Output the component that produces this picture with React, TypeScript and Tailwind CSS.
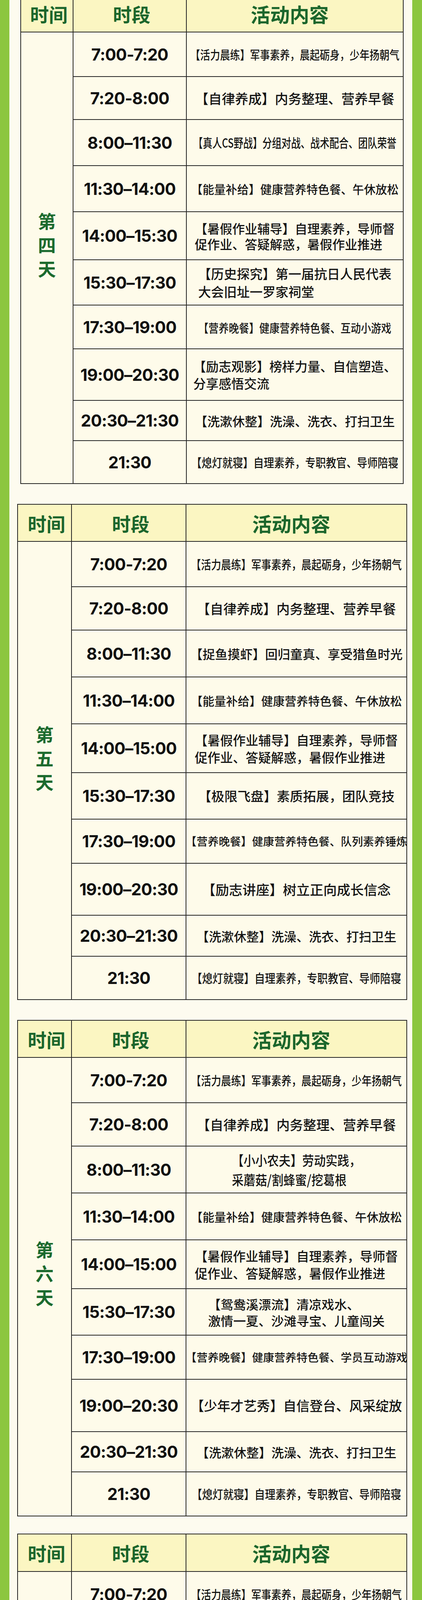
import { Fragment } from "react";

type Row = {
  time: string;
  lines: string[];
  text: string;
  h: string;
};

type Day = {
  label: string[];
  cols: string;
  wrap: string;
  headH: string;
  labelCls: string;
  rows: Row[];
};

const day4: Row[] = [
  { time: "7:00-7:20", lines: ["【活力晨练】军事素养，晨起砺身，少年扬朝气"], text: "text-[25.5px] scale-y-[1.2]", h: "h-[114px]" },
  { time: "7:20-8:00", lines: ["【自律养成】内务整理、营养早餐"], text: "text-[34px]", h: "h-[110px]" },
  { time: "8:00–11:30", lines: ["【真人CS野战】分组对战、战术配合、团队荣誉"], text: "text-[24.5px] scale-y-[1.3]", h: "h-[118px]" },
  { time: "11:30–14:00", lines: ["【能量补给】健康营养特色餐、午休放松"], text: "text-[29.5px]", h: "h-[118px]" },
  { time: "14:00–15:30", lines: ["【暑假作业辅导】自理素养，导师督", "促作业、答疑解惑，暑假作业推进"], text: "text-[32px] leading-[40px]", h: "h-[123px]" },
  { time: "15:30–17:30", lines: ["【历史探究】第一届抗日人民代表", "大会旧址一罗家祠堂"], text: "text-[33px] leading-[46px]", h: "h-[116px]" },
  { time: "17:30–19:00", lines: ["【营养晚餐】健康营养特色餐、互动小游戏"], text: "text-[26px] scale-y-[1.15]", h: "h-[112px]" },
  { time: "19:00–20:30", lines: ["【励志观影】榜样力量、自信塑造、", "分享感悟交流"], text: "text-[32.5px] leading-[44px]", h: "h-[132px]" },
  { time: "20:30–21:30", lines: ["【洗漱休整】洗澡、洗衣、打扫卫生"], text: "text-[32px]", h: "h-[103px]" },
  { time: "21:30", lines: ["【熄灯就寝】自理素养，专职教官、导师陪寝"], text: "text-[26.5px] scale-y-[1.15]", h: "h-[110px]" },
];

const day5: Row[] = [
  { time: "7:00-7:20", lines: ["【活力晨练】军事素养，晨起砺身，少年扬朝气"], text: "text-[25.7px] scale-y-[1.2]", h: "h-[116px]" },
  { time: "7:20-8:00", lines: ["【自律养成】内务整理、营养早餐"], text: "text-[34px]", h: "h-[111px]" },
  { time: "8:00–11:30", lines: ["【捉鱼摸虾】回归童真、享受猎鱼时光"], text: "text-[32px]", h: "h-[120px]" },
  { time: "11:30–14:00", lines: ["【能量补给】健康营养特色餐、午休放松"], text: "text-[30px]", h: "h-[120px]" },
  { time: "14:00–15:00", lines: ["【暑假作业辅导】自理素养，导师督", "促作业、答疑解惑，暑假作业推进"], text: "text-[32.5px] leading-[44px]", h: "h-[125px]" },
  { time: "15:30–17:30", lines: ["【极限飞盘】素质拓展，团队竞技"], text: "text-[33.5px]", h: "h-[119px]" },
  { time: "17:30–19:00", lines: ["【营养晚餐】健康营养特色餐、队列素养锤炼"], text: "text-[28.4px]", h: "h-[113px]" },
  { time: "19:00–20:30", lines: ["【励志讲座】树立正向成长信念"], text: "text-[34.5px]", h: "h-[133px]" },
  { time: "20:30–21:30", lines: ["【洗漱休整】洗澡、洗衣、打扫卫生"], text: "text-[32px]", h: "h-[105px]" },
  { time: "21:30", lines: ["【熄灯就寝】自理素养，专职教官、导师陪寝"], text: "text-[26.8px] scale-y-[1.15]", h: "h-[111px]" },
];

const day6: Row[] = [
  { time: "7:00-7:20", lines: ["【活力晨练】军事素养，晨起砺身，少年扬朝气"], text: "text-[25.7px] scale-y-[1.2]", h: "h-[116px]" },
  { time: "7:20-8:00", lines: ["【自律养成】内务整理、营养早餐"], text: "text-[34px]", h: "h-[111px]" },
  { time: "8:00–11:30", lines: ["【小小农夫】劳动实践，", "采蘑菇/割蜂蜜/挖葛根"], text: "text-[30px] leading-[44px] scale-y-[1.15] text-center", h: "h-[120px]" },
  { time: "11:30–14:00", lines: ["【能量补给】健康营养特色餐、午休放松"], text: "text-[30px]", h: "h-[120px]" },
  { time: "14:00–15:00", lines: ["【暑假作业辅导】自理素养，导师督", "促作业、答疑解惑，暑假作业推进"], text: "text-[32.5px] leading-[44px]", h: "h-[125px]" },
  { time: "15:30–17:30", lines: ["【鸳鸯溪漂流】清凉戏水、", "激情一夏、沙滩寻宝、儿童闯关"], text: "text-[32.3px] leading-[42px]", h: "h-[119px]" },
  { time: "17:30–19:00", lines: ["【营养晚餐】健康营养特色餐、学员互动游戏"], text: "text-[28.4px]", h: "h-[113px]" },
  { time: "19:00–20:30", lines: ["【少年才艺秀】自信登台、风采绽放"], text: "text-[33.8px]", h: "h-[134px]" },
  { time: "20:30–21:30", lines: ["【洗漱休整】洗澡、洗衣、打扫卫生"], text: "text-[32px]", h: "h-[103px]" },
  { time: "21:30", lines: ["【熄灯就寝】自理素养，专职教官、导师陪寝"], text: "text-[26.8px] scale-y-[1.15]", h: "h-[113px]" },
];

const day7: Row[] = [
  { time: "7:00-7:20", lines: ["【活力晨练】军事素养，晨起砺身，少年扬朝气"], text: "text-[25.7px] scale-y-[1.2]", h: "h-[116px]" },
  { time: "7:20-8:00", lines: ["【自律养成】内务整理、营养早餐"], text: "text-[34px]", h: "h-[112px]" },
  { time: "8:00–10:00", lines: ["【乡村生活观摩】劳动实践，采摘、", "捉鸡、烤鱼"], text: "text-[30.5px] leading-[48px] scale-y-[1.1]", h: "h-[120px]" },
  { time: "10:00–11:30", lines: ["【结营盛典】授证表彰、", "成长分享、集体合影"], text: "text-[35px] leading-[50px] pl-[14px]", h: "h-[119px]" },
  { time: "11:30–12:30", lines: ["【能量补给】健康营养特色餐"], text: "text-[42px]", h: "h-[125px]" },
  { time: "12:30", lines: ["【满载而归】安全返程、成长收官"], text: "text-[33.3px]", h: "h-[119px]" },
];

const days: Day[] = [
  { label: ["第", "四", "天"], cols: "grid-cols-[134px_290px_555px]", wrap: "-mt-[14px] ml-[28px]", headH: "h-[95px]", labelCls: "row-span-10 pb-[70px]", rows: day4 },
  { label: ["第", "五", "天"], cols: "grid-cols-[138px_293px_565px]", wrap: "mt-[51px] ml-[20px]", headH: "h-[95px]", labelCls: "row-span-10 pb-[66px]", rows: day5 },
  { label: ["第", "六", "天"], cols: "grid-cols-[138px_293px_565px]", wrap: "mt-[51px] ml-[20px]", headH: "h-[95px]", labelCls: "row-span-10 pb-[72px]", rows: day6 },
  { label: ["第", "七", "天"], cols: "grid-cols-[138px_293px_565px]", wrap: "mt-[44px] ml-[20px]", headH: "h-[96px]", labelCls: "row-span-6 pt-[28px]", rows: day7 },
];

const cell = "border-r-2 border-b-2 border-[#262626]";
const head = "bg-[#fbf6c2] flex items-center justify-center font-bold leading-none text-[#1b662c]";

function DayTable({ day }: { day: Day }) {
  return (
    <div className={`grid w-fit border-l-2 border-t-2 border-[#262626] ${day.cols} ${day.wrap}`}>
      <div className={`${cell} ${head} ${day.headH} text-[48px] pl-[10px]`}>时间</div>
      <div className={`${cell} ${head} ${day.headH} text-[48px] pl-[10px]`}>时段</div>
      <div className={`${cell} ${head} ${day.headH} text-[50px] pr-[26px]`}>活动内容</div>

      {/* day label spans all rows */}
      <div className={`${cell} bg-[#fefbea] flex flex-col items-center justify-center ${day.labelCls}`}>
        {day.label.map((c) => (
          <span key={c} className="text-[46px] leading-[61px] font-bold text-[#1b6a2e]">
            {c}
          </span>
        ))}
      </div>

      {day.rows.map((r, i) => (
        <Fragment key={i}>
          <div className={`${cell} ${r.h} bg-[#fefbea] flex items-center justify-center font-['Inter','Liberation_Sans',sans-serif] text-[42px] font-bold text-[#111] tracking-[-0.8px]`}>
            {r.time}
          </div>
          <div className={`${cell} ${r.h} bg-[#fefbea] flex items-center justify-center font-medium text-[#141414]`}>
            <div className={`inline-block text-left whitespace-nowrap ${r.text}`}>
              {r.lines.map((l, j) => (
                <div key={j}>{l}</div>
              ))}
            </div>
          </div>
        </Fragment>
      ))}
    </div>
  );
}

export default function App() {
  return (
    <div className="w-[1080px] h-[4793px] overflow-hidden bg-[#8cc63f] font-['Noto_Sans_CJK_SC','Noto_Sans',sans-serif]">
      <div className="ml-[24px] w-[1031px] h-full bg-[#fdfbef] overflow-hidden">
        {days.map((d) => (
          <DayTable key={d.label[1]} day={d} />
        ))}
      </div>
    </div>
  );
}
